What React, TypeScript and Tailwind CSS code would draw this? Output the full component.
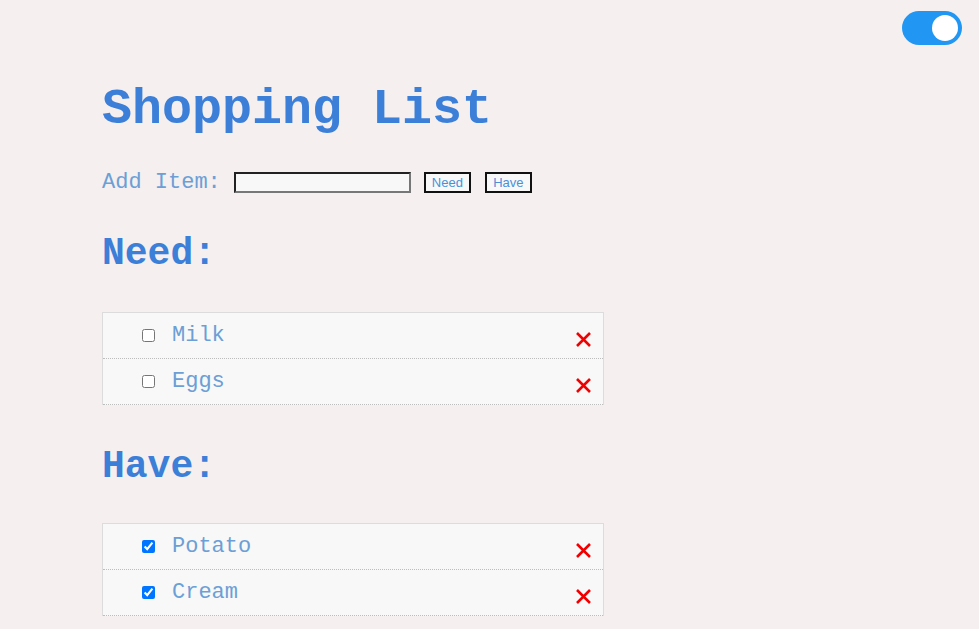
import { useState } from "react";

type Item = { name: string; done: boolean };

const mono = "font-['Liberation_Mono','Courier_New',monospace]";

function RemoveIcon() {
  return (
    <svg width="17" height="17" viewBox="0 0 17 17" className="mt-2">
      <path d="M2 2 L15 15 M15 2 L2 15" stroke="#f00000" strokeWidth="2.6" />
    </svg>
  );
}

function ThemeToggle() {
  const [on, setOn] = useState(true);
  return (
    <button
      onClick={() => setOn(!on)}
      className={`flex h-[34px] w-[60px] items-center rounded-full px-[4px] ${
        on ? "justify-end bg-[#2196f3]" : "justify-start bg-[#ccc]"
      }`}
    >
      <span className="size-[26px] rounded-full bg-white" />
    </button>
  );
}

function ListRow({ item }: { item: Item }) {
  return (
    <li className="flex h-[46px] items-center border-b border-dotted border-[#bdbdbd] pl-[39px] pr-[11px]">
      <input
        type="checkbox"
        defaultChecked={item.done}
        className="m-0 size-[13px]"
      />
      <span className="ml-[17px] flex-1 text-[22px] text-[#6c9fd6]">
        {item.name}
      </span>
      <RemoveIcon />
    </li>
  );
}

function ItemList({ items }: { items: Item[] }) {
  return (
    <ul className="w-[502px] border-x border-t border-[#dcdcdc] bg-[#f8f8f8]">
      {items.map((item) => (
        <ListRow key={item.name} item={item} />
      ))}
    </ul>
  );
}

export default function App() {
  const need = [
    { name: "Milk", done: false },
    { name: "Eggs", done: false },
  ];
  const have = [
    { name: "Potato", done: true },
    { name: "Cream", done: true },
  ];

  return (
    <div className={`min-h-screen bg-[#f5efef] ${mono}`}>
      <div className="flex justify-end pt-[11px] pr-[17px]">
        <ThemeToggle />
      </div>

      <main className="pl-[102px] pb-[14px]">
        <h1 className="mt-[40px] text-[50px] leading-none font-bold text-[#3b7fd8]">
          Shopping List
        </h1>

        <div className="mt-[37px] flex h-[21px] items-center">
          <label className="text-[22px] text-[#6c9fd6]">Add Item:</label>
          <input
            type="text"
            className="ml-[13px] h-[21px] w-[177px] border-2 border-t-[#222] border-l-[#222] border-r-[#777] border-b-[#777] bg-[#f8f8f8]"
          />
          <button className="ml-[13px] h-[21px] w-[47px] border-2 border-[#111] bg-[#f8f8f8] font-['Liberation_Sans',Arial,sans-serif] text-[13px] leading-none text-[#4a90d9]">
            Need
          </button>
          <button className="ml-[14px] h-[21px] w-[47px] border-2 border-[#111] bg-[#f8f8f8] font-['Liberation_Sans',Arial,sans-serif] text-[13px] leading-none text-[#4a90d9]">
            Have
          </button>
        </div>

        <h2 className="mt-[42px] text-[38px] leading-none font-bold text-[#3b7fd8]">
          Need:
        </h2>
        <div className="mt-[39px]">
          <ItemList items={need} />
        </div>

        <h2 className="mt-[43px] text-[38px] leading-none font-bold text-[#3b7fd8]">
          Have:
        </h2>
        <div className="mt-[37px]">
          <ItemList items={have} />
        </div>
      </main>
    </div>
  );
}
